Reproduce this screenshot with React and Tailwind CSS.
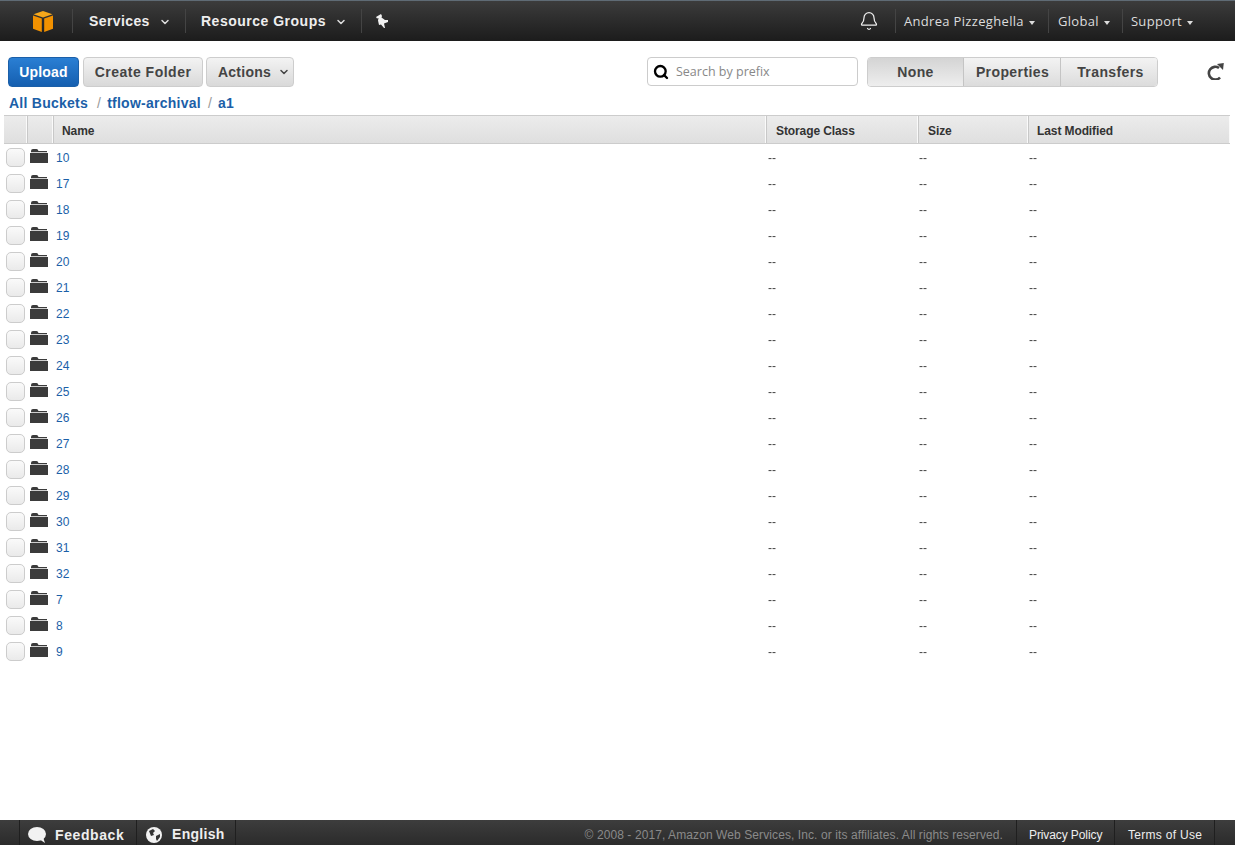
import { Bell, ChevronDown, Search } from 'lucide-react';

const folders = ['10', '17', '18', '19', '20', '21', '22', '23', '24', '25', '26', '27', '28', '29', '30', '31', '32', '7', '8', '9'];

const gridCols = 'grid grid-cols-[23px_26px_713px_152px_110px_202px]';
const headCell = 'h-full flex items-center pt-[3px] border-r border-white/80 border-l border-l-[#c8c8c8] bg-gradient-to-b from-[#ececec] to-[#dfdfdf] text-[12px] tracking-[-0.1px] font-bold text-[#333]';
const greyBtn = 'h-[30px] rounded-[4px] border border-[#cdcdcd] bg-gradient-to-b from-[#f3f3f3] to-[#d9d9d9] text-[14px] font-bold text-[#444] flex items-center justify-center';
const tabCell = 'flex items-center justify-center tracking-[0.4px]';

function Caret() {
	return <span className="ml-[5px] mt-[1px] w-0 h-0 border-x-[3.5px] border-x-transparent border-t-[4px] border-t-[#ddd]" />;
}

function NavSep() {
	return <span className="w-px h-[24px] bg-[#444]" />;
}

function Cube() {
	return (
		<svg width="20" height="21" viewBox="0 0 20 21">
			<path d="M10 0 L19.5 3.2 L10 6.4 L0.5 3.2 Z" fill="#f7a81b" />
			<path d="M0 4.5 L8.8 7.6 V21 L0 17.8 Z" fill="#f29100" />
			<path d="M20 4.5 L11.2 7.6 V21 L20 17.8 Z" fill="#f29100" />
		</svg>
	);
}

function Pin() {
	return (
		<svg width="14" height="14" viewBox="0 0 14 14" fill="#f2f2f2">
			<path d="M1 3 L6 0 L7 2 L6.5 3.5 L10 6 L13 6 L13 8 L9 9.5 L10 14 L9 14 L6 10.5 L4 11 L3 6.5 L3.5 4 L2 4.5 Z" />
		</svg>
	);
}

function Folder() {
	return (
		<svg width="18" height="14" viewBox="0 0 18 14" fill="#3b3b3b">
			<path d="M1 2 Q1 0 3 0 H6.5 Q8 0 8.5 2 H17 V3.2 H1 Z" />
			<rect x="0" y="4" width="18" height="10" />
		</svg>
	);
}

function Bubble() {
	return (
		<svg width="18" height="16" viewBox="0 0 18 16" fill="#f2f2f2">
			<ellipse cx="9" cy="7" rx="9" ry="7" />
			<path d="M11 12 L17 16 L15 10 Z" />
		</svg>
	);
}

function Globe() {
	return (
		<svg width="16" height="16" viewBox="0 0 16 16">
			<circle cx="8" cy="8" r="8" fill="#f2f2f2" />
			<path d="M3 4 L7 2 L9 4 L7 6 L8 8 L5 9 Z" fill="#333" />
			<path d="M10 9 L14 7 L14 10 L11 14 L10 12 Z" fill="#333" />
		</svg>
	);
}

function Refresh() {
	return (
		<svg width="17" height="17" viewBox="0 0 17 17" fill="none">
			<path d="M12 5 A6.4 6.4 0 1 0 13 14.5" stroke="#444" strokeWidth="2.6" />
			<path d="M10 1 L16.8 0 L16 7 Z" fill="#444" />
		</svg>
	);
}

export default function App() {
	return (
		<div className="h-[845px] w-[1235px] flex flex-col bg-white font-['Liberation_Sans',Arial,sans-serif] overflow-hidden">
			<nav className="h-[41px] shrink-0 flex items-center border-t border-t-[#5f6b75] bg-gradient-to-b from-[#3c3c3c] to-[#1c1c1c] text-white">
				<div className="w-[72px] flex justify-center pl-[13px]"><Cube /></div>
				<NavSep />
				<div className="flex items-center w-[112px] pl-[16px] pt-[1px] text-[14px] tracking-[0.4px] font-bold text-[#eee]">
					Services
					<ChevronDown size={12} strokeWidth={3} className="ml-[9px] text-[#ddd]" />
				</div>
				<NavSep />
				<div className="flex items-center w-[175px] pl-[15px] pt-[1px] text-[14px] tracking-[0.5px] font-bold text-[#eee]">
					Resource Groups
					<ChevronDown size={12} strokeWidth={3} className="ml-[9px] text-[#ddd]" />
				</div>
				<NavSep />
				<div className="ml-[13px]"><Pin /></div>
				<div className="ml-auto flex items-center text-[13px] tracking-[0.33px] text-[#ddd] font-['Open_Sans',sans-serif] pr-[42px]">
					<Bell size={20} strokeWidth={1.5} className="text-[#eee] mr-[16px]" />
					<NavSep />
					<div className="flex items-center w-[152px] pl-[8px] pt-[2px]">Andrea Pizzeghella<Caret /></div>
					<NavSep />
					<div className="flex items-center w-[73px] pl-[9px] pt-[2px]">Global<Caret /></div>
					<NavSep />
					<div className="flex items-center pl-[8px] pt-[2px]">Support<Caret /></div>
				</div>
			</nav>

			<div className="pt-[16px] shrink-0 flex items-start pl-[8px]">
				<button className="w-[71px] h-[30px] rounded-[4px] border border-[#1b5fa8] bg-gradient-to-b from-[#2a7fd4] to-[#155fb0] text-white text-[14px] tracking-[0.2px] font-bold">Upload</button>
				<button className={`${greyBtn} w-[120px] ml-[4px] tracking-[0.5px]`}>Create Folder</button>
				<button className={`${greyBtn} w-[88px] ml-[3px] pl-[8px] tracking-[0.25px]`}>
					Actions
					<ChevronDown size={12} strokeWidth={3} className="ml-[7px]" />
				</button>
				<div className="w-[211px] h-[29px] ml-[353px] rounded-[4px] border border-[#ccc] flex items-center pl-[5px]">
					<Search size={16} strokeWidth={3.5} className="text-black" />
					<span className="ml-[7px] pt-[2px] text-[12.5px] text-[#888] font-['Open_Sans',sans-serif]">Search by prefix</span>
				</div>
				<div className="ml-[9px] w-[291px] h-[30px] rounded-[4px] border border-[#cdcdcd] flex text-[14px] font-bold text-[#444] overflow-hidden">
					<div className={`${tabCell} w-[96px] border-r border-[#c4c4c4] bg-gradient-to-b from-[#d4d4d4] to-[#eeeeee]`}>None</div>
					<div className={`${tabCell} w-[97px] pl-[1px] border-r border-[#c4c4c4] bg-gradient-to-b from-[#f3f3f3] to-[#dcdcdc]`}>Properties</div>
					<div className={`${tabCell} flex-1 pl-[3px] bg-gradient-to-b from-[#f3f3f3] to-[#dcdcdc]`}>Transfers</div>
				</div>
				<div className="ml-[49px] mt-[6px]"><Refresh /></div>
			</div>

			<div className="h-[28px] shrink-0 pl-[9px] text-[14px] tracking-[0.25px] font-bold text-[#1b5fa8] flex items-start pt-[7px] leading-[18px]">
				<span>All Buckets</span>
				<span className="ml-[9px] mr-[6px] font-normal text-[#999]">/</span>
				<span>tflow-archival</span>
				<span className="ml-[7px] mr-[6px] font-normal text-[#999]">/</span>
				<span>a1</span>
			</div>

			<div className="ml-[4px] w-[1226px] shrink-0 border-t border-t-[#ccc]">
				<div className={`${gridCols} h-[28px] border-b border-b-[#ccc]`}>
					<div className={`${headCell} border-l-0`} />
					<div className={headCell} />
					<div className={`${headCell} pl-[8px]`}>Name</div>
					<div className={`${headCell} pl-[9px]`}>Storage Class</div>
					<div className={`${headCell} pl-[9px]`}>Size</div>
					<div className={`${headCell} pl-[8px]`}>Last Modified</div>
				</div>
				<div className="pt-[1px]">
					{folders.map((name) => (
						<div key={name} className={`${gridCols} h-[26px] items-center text-[12px] text-[#444]`}>
							<div className="h-[19px] w-[19px] ml-[2px] -mt-[1px] rounded-[5px] border border-[#ccc] bg-gradient-to-b from-[#fafafa] to-[#eaeaea]" />
							<div className="pl-[3px] flex -mt-[5px]"><Folder /></div>
							<div className="pl-[3px] text-[#1b5fa8]">{name}</div>
							<div className="pl-[2px] transform-gpu">--</div>
							<div className="pl-[1px] transform-gpu">--</div>
							<div className="pl-[1px] transform-gpu">--</div>
						</div>
					))}
				</div>
			</div>

			<footer className="mt-auto h-[25px] shrink-0 flex items-center bg-gradient-to-b from-[#3d3d3d] to-[#2b2b2b] text-[12px]">
				<div className="ml-[19px] h-full w-[118px] flex items-center border-x border-[#1f1f1f] pl-[8px] pt-[5px] text-[14px] tracking-[0.6px] font-bold text-[#eee]">
					<Bubble />
					<span className="ml-[9px]">Feedback</span>
				</div>
				<div className="h-full w-[99px] flex items-center border-r border-[#1f1f1f] pl-[9px] pt-[4px] text-[14px] tracking-[0.3px] font-bold text-[#eee]">
					<Globe />
					<span className="ml-[10px]">English</span>
				</div>
				<span className="ml-auto pt-[4px] text-[#8a8a8a] tracking-[0.09px] pr-[13px]">© 2008 - 2017, Amazon Web Services, Inc. or its affiliates. All rights reserved.</span>
				<div className="h-full w-[98px] flex items-center border-l border-[#1f1f1f] pl-[12px] pt-[4px] tracking-[-0.1px] text-[#eee]">Privacy Policy</div>
				<div className="h-full w-[101px] flex items-center border-x border-[#1f1f1f] pl-[13px] pt-[4px] mr-[20px] tracking-[0.3px] text-[#eee]">Terms of Use</div>
			</footer>
		</div>
	);
}
